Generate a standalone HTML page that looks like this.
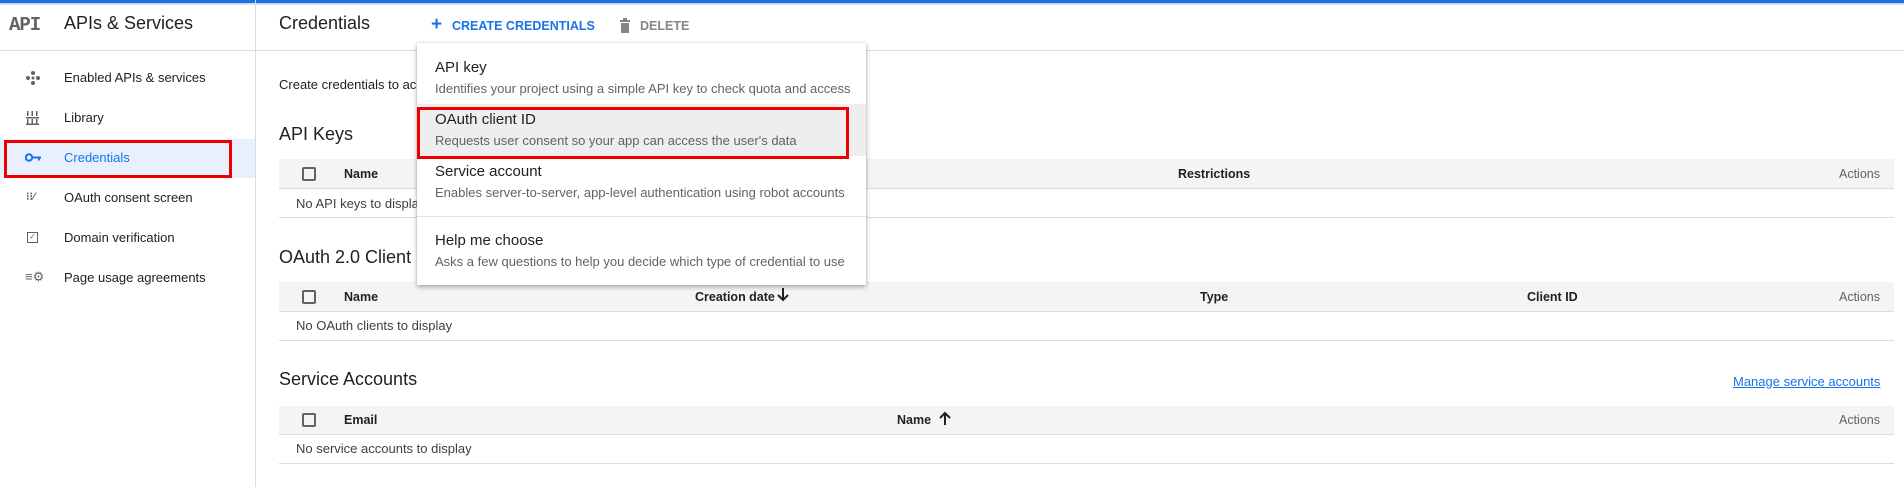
<!DOCTYPE html>
<html><head><meta charset="utf-8"><style>
*{box-sizing:border-box;margin:0;padding:0}
body{width:1904px;height:487px;overflow:hidden;background:#fff;font-family:"Liberation Sans",Arial,sans-serif;color:#202124;position:relative}
.a{position:absolute;white-space:nowrap}
.nav{font-size:13px;color:#202124}
.th{font-size:12.5px;font-weight:bold;color:#202124}
.hdr{position:absolute;left:279px;width:1615px;background:#f4f4f4;border-bottom:1px solid #ddd}
.line{position:absolute;left:279px;width:1615px;height:1px;background:#ddd}
.cb{position:absolute;left:302px;width:14px;height:14px;border:2px solid #5f6368;border-radius:2px}
.t{font-size:15px;color:#202124}
.d{font-size:13px;color:#5f6368}
</style></head><body>
<div class="a" style="left:0;top:0;width:1904px;height:3px;background:#1a73e8"></div>
<div class="a" style="left:0;top:3px;width:1904px;height:3px;background:linear-gradient(#ccc,#fff)"></div>
<div class="a" style="left:255px;top:0;width:1px;height:487px;background:#dadce0"></div>
<div class="a" style="left:0;top:50px;width:1904px;height:1px;background:#dadce0"></div>
<div class="a" style="left:9px;top:14px;font-family:'Liberation Mono',monospace;font-size:19px;font-weight:bold;color:#5f6368;letter-spacing:-1px">API</div>
<div class="a" style="left:64px;top:13px;font-size:18px">APIs &amp; Services</div>
<div class="a" style="left:279px;top:13px;font-size:18px">Credentials</div>
<div class="a" style="left:431px;top:16px;font-size:19px;color:#1a73e8;line-height:18px;font-weight:bold">+</div>
<div class="a" style="left:452px;top:19px;font-size:12.5px;font-weight:bold;color:#1a73e8">CREATE CREDENTIALS</div>
<svg class="a" style="left:619px;top:18px" width="12" height="15" viewBox="0 0 12 15"><path d="M1 2h10v2H1zM4 0h4v2H4zM2 5h8v10H2z" fill="#80868b"/></svg>
<div class="a" style="left:640px;top:19px;font-size:12.5px;font-weight:bold;color:#80868b">DELETE</div>

<div class="a" style="left:0;top:139px;width:255px;height:39px;background:#e8f0fe"></div>
<div class="a" style="left:4px;top:140px;width:228px;height:38px;border:3px solid #e00"></div>
<svg class="a" style="left:26px;top:71px" width="14" height="14" viewBox="0 0 14 14" fill="#5f6368"><circle cx="7" cy="2" r="2"/><circle cx="7" cy="12" r="2"/><circle cx="2" cy="7" r="2"/><circle cx="12" cy="7" r="2"/><circle cx="7" cy="7" r="1.5"/></svg>
<div class="a nav" style="left:64px;top:70px">Enabled APIs &amp; services</div>
<svg class="a" style="left:26px;top:111px" width="13" height="14" viewBox="0 0 13 14" fill="#5f6368"><rect x="1" y="0" width="1.5" height="5"/><rect x="5.5" y="0" width="1.5" height="5"/><rect x="10" y="0" width="1.5" height="5"/><rect x="0" y="6" width="13" height="1.5"/><rect x="1" y="8" width="1.5" height="5"/><rect x="5.5" y="8" width="1.5" height="5"/><rect x="10" y="8" width="1.5" height="5"/><rect x="0" y="12.5" width="13" height="1.5"/></svg>
<div class="a nav" style="left:64px;top:110px">Library</div>
<svg class="a" style="left:25px;top:153px" width="16" height="9" viewBox="0 0 16 9" fill="#1a73e8"><circle cx="4" cy="4.5" r="3.2" fill="none" stroke="#1a73e8" stroke-width="2"/><rect x="7" y="3.5" width="9" height="2"/><rect x="13" y="3.5" width="2" height="4"/></svg>
<div class="a nav" style="left:64px;top:150px;color:#1a73e8">Credentials</div>
<div class="a nav" style="left:26px;top:190px;font-size:11px;color:#5f6368;font-weight:bold">⁝⁝⁄</div>
<div class="a nav" style="left:64px;top:190px">OAuth consent screen</div>
<div class="a" style="left:27px;top:232px;width:11px;height:11px;border:1.5px solid #5f6368;font-size:8px;line-height:8px;text-align:center;color:#5f6368">✓</div>
<div class="a nav" style="left:64px;top:230px">Domain verification</div>
<div class="a nav" style="left:25px;top:269px;font-size:13px;color:#5f6368">≡⚙</div>
<div class="a nav" style="left:64px;top:270px">Page usage agreements</div>

<div class="a" style="left:279px;top:77px;font-size:13px">Create credentials to acc</div>
<div class="a" style="left:279px;top:124px;font-size:18px">API Keys</div>
<div class="hdr" style="top:159px;height:30px"></div>
<div class="cb" style="top:167px"></div>
<div class="a th" style="left:344px;top:167px">Name</div>
<div class="a th" style="left:1178px;top:167px">Restrictions</div>
<div class="a th" style="left:1839px;top:167px;color:#5f6368;font-weight:normal">Actions</div>
<div class="a" style="left:296px;top:196px;font-size:13px;color:#3c4043">No API keys to displa</div>
<div class="line" style="top:217px"></div>

<div class="a" style="left:279px;top:247px;font-size:18px">OAuth 2.0 Client I</div>
<div class="hdr" style="top:282px;height:30px"></div>
<div class="cb" style="top:290px"></div>
<div class="a th" style="left:344px;top:290px">Name</div>
<div class="a th" style="left:695px;top:290px">Creation date</div>
<svg class="a" style="left:777px;top:288px" width="12" height="14" viewBox="0 0 12 14"><path d="M6 0v12M1 7l5 5 5-5" stroke="#202124" stroke-width="2" fill="none"/></svg>
<div class="a th" style="left:1200px;top:290px">Type</div>
<div class="a th" style="left:1527px;top:290px">Client ID</div>
<div class="a th" style="left:1839px;top:290px;color:#5f6368;font-weight:normal">Actions</div>
<div class="a" style="left:296px;top:318px;font-size:13px;color:#3c4043">No OAuth clients to display</div>
<div class="line" style="top:340px"></div>

<div class="a" style="left:279px;top:369px;font-size:18px">Service Accounts</div>
<div class="a" style="left:1733px;top:374px;font-size:13px;color:#1a73e8;text-decoration:underline">Manage service accounts</div>
<div class="hdr" style="top:406px;height:29px"></div>
<div class="cb" style="top:413px"></div>
<div class="a th" style="left:344px;top:413px">Email</div>
<div class="a th" style="left:897px;top:413px">Name</div>
<svg class="a" style="left:939px;top:411px" width="12" height="14" viewBox="0 0 12 14"><path d="M6 14V2M1 7l5-5 5 5" stroke="#202124" stroke-width="2" fill="none"/></svg>
<div class="a th" style="left:1839px;top:413px;color:#5f6368;font-weight:normal">Actions</div>
<div class="a" style="left:296px;top:441px;font-size:13px;color:#3c4043">No service accounts to display</div>
<div class="line" style="top:463px"></div>

<div class="a" style="left:417px;top:43px;width:449px;height:242px;background:#fff;box-shadow:0 2px 5px rgba(0,0,0,.3),0 0 2px rgba(0,0,0,.15)">
  <div class="a" style="left:0;top:61px;width:449px;height:52px;background:#eeeeee"></div>
  <div class="a" style="left:0;top:64px;width:432px;height:52px;border:3px solid #e00"></div>
  <div class="a" style="left:0;top:173px;width:449px;height:1px;background:#e0e0e0"></div>
  <div class="a t" style="left:18px;top:16px">API key</div>
  <div class="a d" style="left:18px;top:38px">Identifies your project using a simple API key to check quota and access</div>
  <div class="a t" style="left:18px;top:68px">OAuth client ID</div>
  <div class="a d" style="left:18px;top:90px">Requests user consent so your app can access the user's data</div>
  <div class="a t" style="left:18px;top:120px">Service account</div>
  <div class="a d" style="left:18px;top:142px">Enables server-to-server, app-level authentication using robot accounts</div>
  <div class="a t" style="left:18px;top:189px">Help me choose</div>
  <div class="a d" style="left:18px;top:211px">Asks a few questions to help you decide which type of credential to use</div>
</div>
</body></html>
